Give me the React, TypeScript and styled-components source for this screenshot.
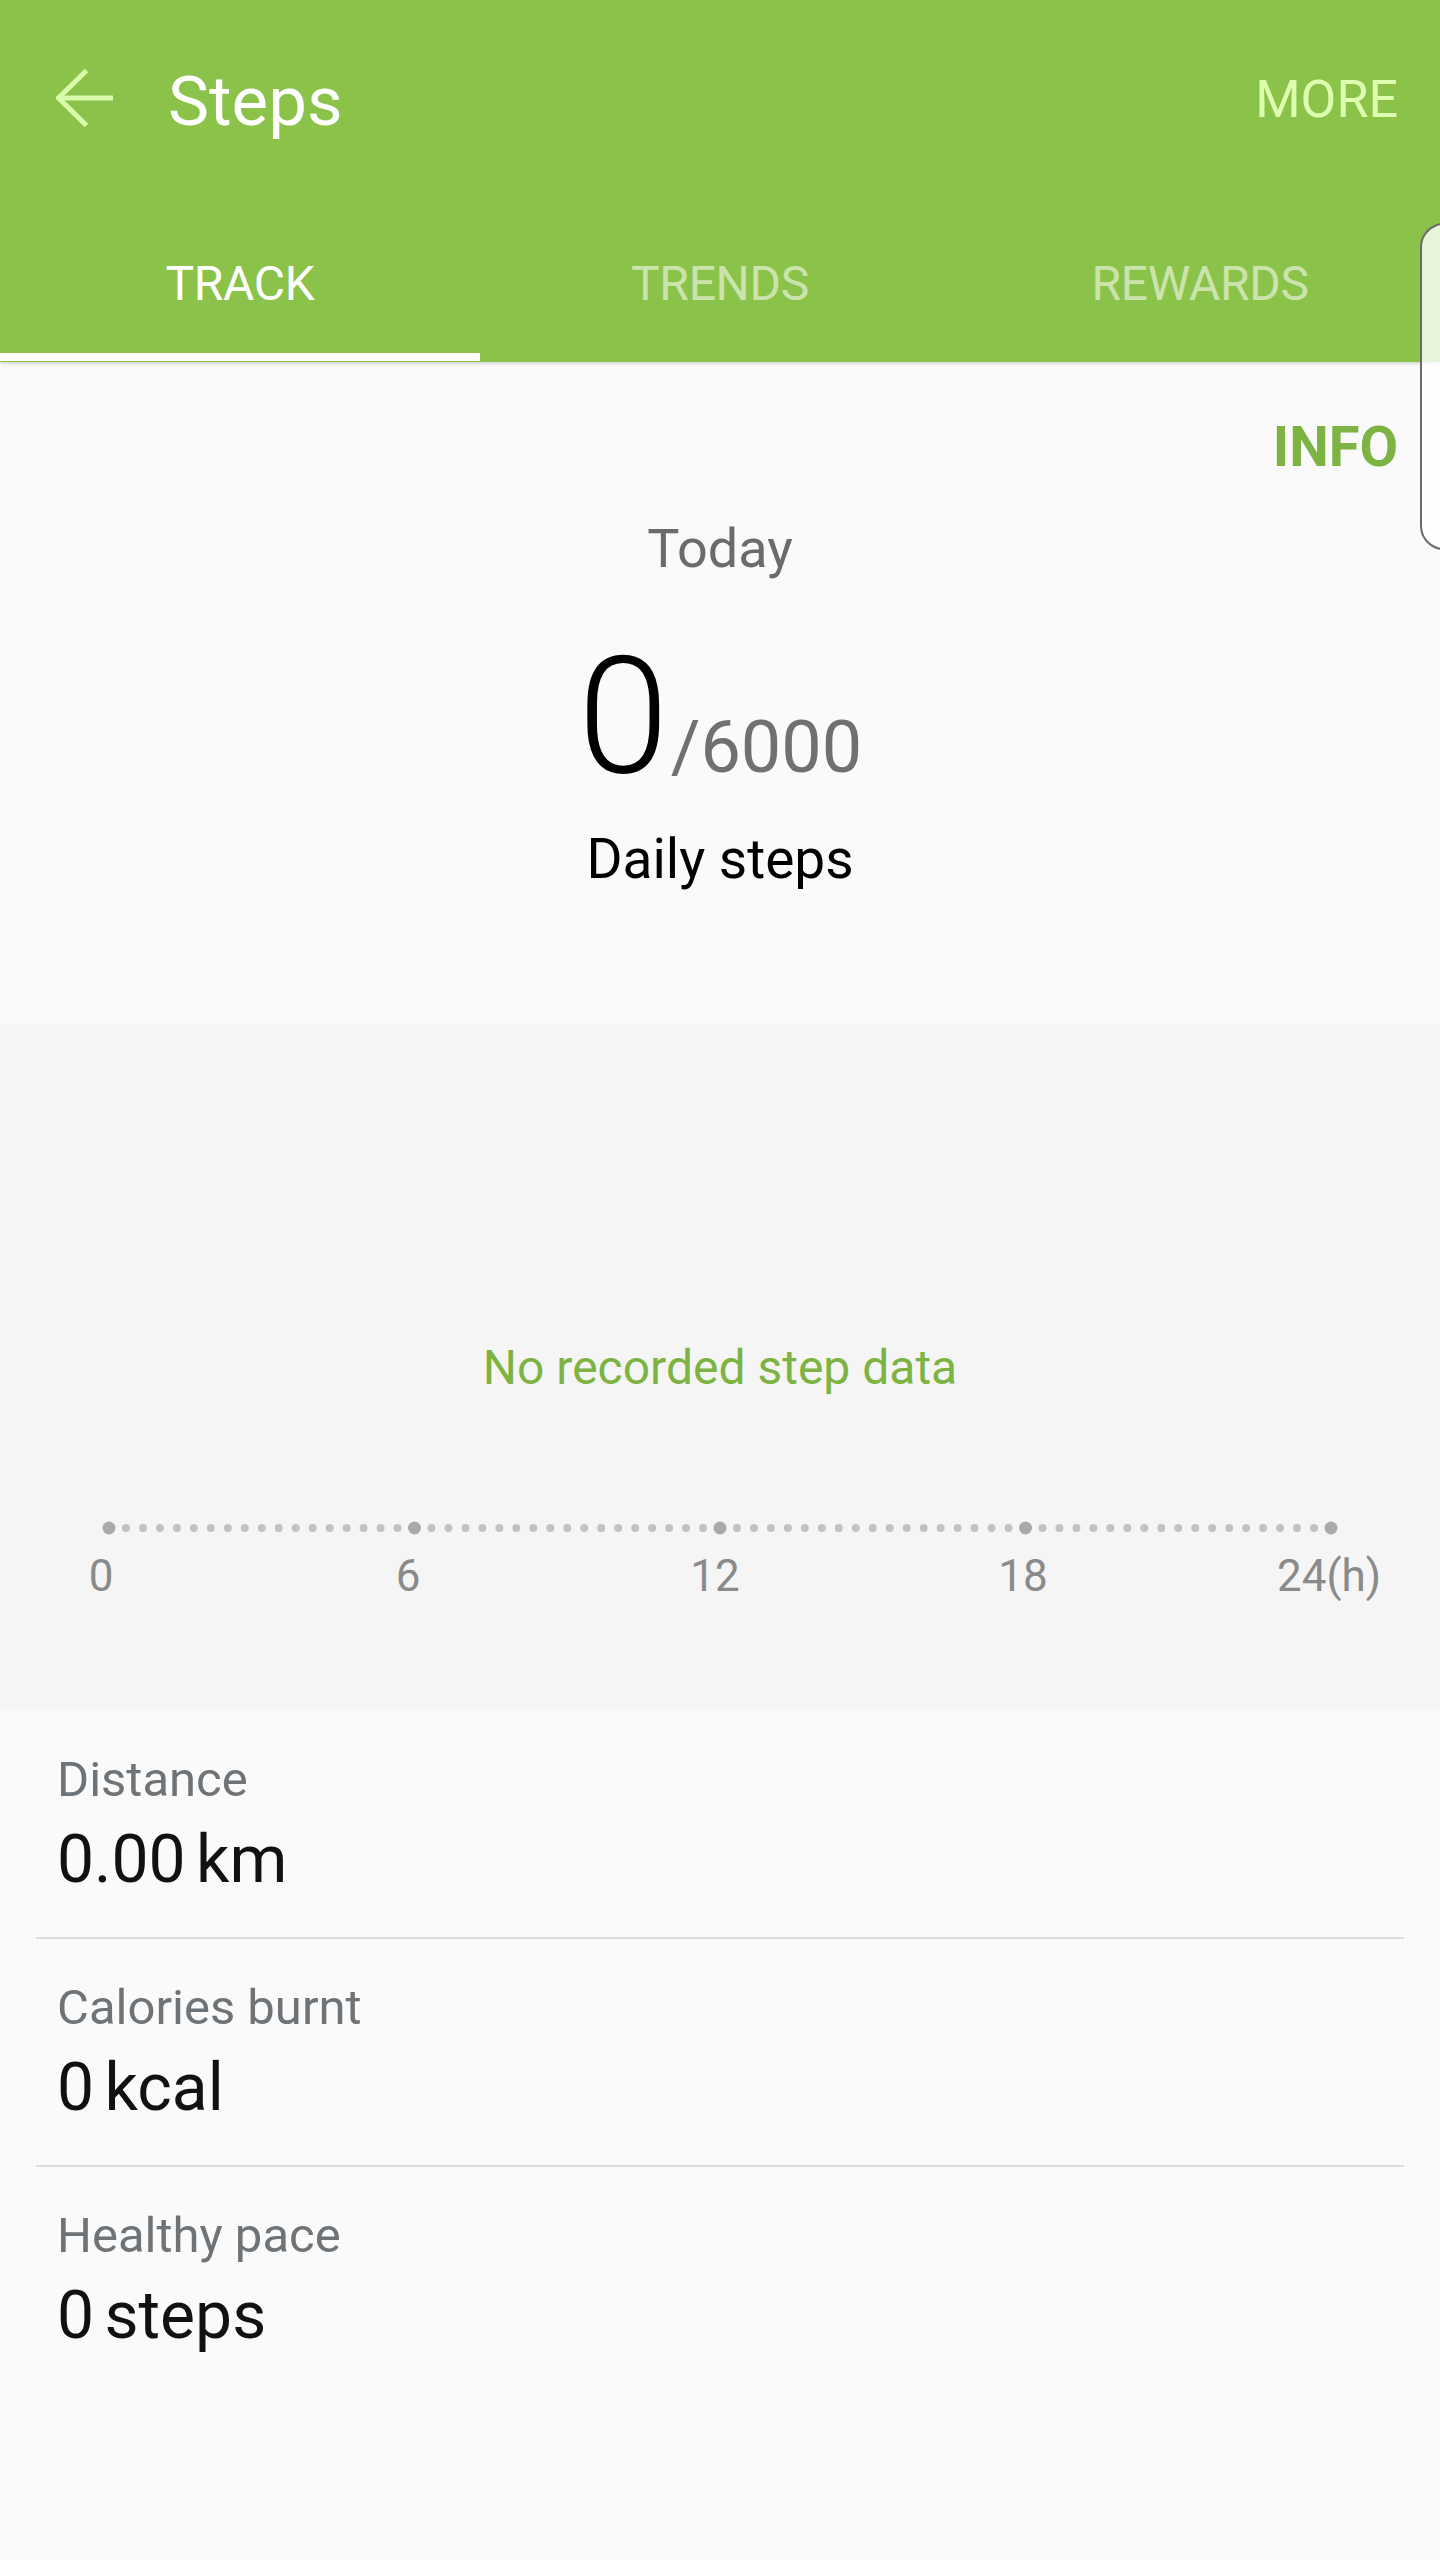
import React from "react";
import styled, { createGlobalStyle } from "styled-components";

const GlobalStyle = createGlobalStyle`
  html, body { margin: 0; padding: 0; }
  body {
    background: #fafafa;
    font-family: Roboto, "Noto Sans", "Liberation Sans", sans-serif;
    -webkit-font-smoothing: antialiased;
  }
`;

const Page = styled.div`
  position: relative;
  width: 1440px;
  min-height: 2560px;
  background: #fafafa;
  overflow: hidden;
`;

const Header = styled.header`
  background: #8bc34a;
  box-shadow: 0 2px 3px rgba(0, 0, 0, 0.14);
  position: relative;
  z-index: 1;
`;

const Toolbar = styled.div`
  height: 202px;
  display: flex;
  align-items: center;
  padding: 0 42px 0 56px;
  box-sizing: border-box;
`;

const BackButton = styled.button`
  width: 58px;
  height: 58px;
  padding: 0;
  border: 0;
  background: none;
  display: flex;
  align-items: center;
  margin-top: -6px;
`;

const Title = styled.h1`
  margin: 2px 0 0 54px;
  flex: 1;
  font-size: 69px;
  font-weight: 400;
  color: #ffffff;
  line-height: 80px;
`;

const MoreButton = styled.span`
  font-size: 52px;
  color: #dfffb0;
  line-height: 64px;
  margin-top: -3px;
`;

const Tabs = styled.nav`
  height: 160px;
  display: grid;
  grid-template-columns: repeat(3, 480px);
`;

const Tab = styled.div<{ $active?: boolean }>`
  position: relative;
  display: flex;
  align-items: center;
  justify-content: center;
  font-size: 48px;
  letter-spacing: -0.3px;
  color: ${(p) => (p.$active ? "#ffffff" : "#cbe4ad")};
  padding-top: 2px;
  box-sizing: border-box;
  &::after {
    content: "";
    position: absolute;
    left: 0;
    right: 0;
    bottom: 1px;
    height: 8px;
    background: ${(p) => (p.$active ? "#ffffff" : "transparent")};
  }
`;

const EdgeHandle = styled.div`
  position: absolute;
  top: 223px;
  right: -4px;
  width: 24px;
  height: 327px;
  box-sizing: border-box;
  border: 2px solid #6a6a6a;
  border-right: none;
  border-radius: 24px 0 0 24px;
  background: rgba(255, 255, 255, 0.8);
  z-index: 5;
`;

const Summary = styled.section`
  height: 662px;
  background: #fafafa;
  display: flex;
  flex-direction: column;
  align-items: center;
  padding: 0 42px;
  box-sizing: border-box;
`;

const InfoLink = styled.div`
  align-self: flex-end;
  margin-top: 53px;
  font-size: 56px;
  line-height: 64px;
  font-weight: 700;
  color: #7cb342;
`;

const Today = styled.div`
  margin-top: 38px;
  font-size: 54px;
  line-height: 64px;
  color: #6b6b6b;
`;

const NumberRow = styled.div`
  margin-top: 53px;
  display: flex;
  align-items: baseline;
  justify-content: center;
`;

const BigValue = styled.span`
  font-size: 164px;
  line-height: 1;
  font-weight: 300;
  color: #000;
`;

const Goal = styled.span`
  font-size: 72px;
  line-height: 1;
  color: #707070;
  margin-left: 2px;
`;

const DailyLabel = styled.div`
  margin-top: 29px;
  font-size: 55px;
  line-height: 64px;
  color: #000;
`;

const Chart = styled.section`
  height: 687px;
  background: #f5f5f5;
  display: flex;
  flex-direction: column;
  align-items: center;
`;

const EmptyMessage = styled.div`
  margin-top: 316px;
  font-size: 48px;
  line-height: 56px;
  color: #7cb342;
`;

const AxisSvg = styled.svg`
  display: block;
  margin-top: 125px;
  width: 1440px;
  height: 14px;
`;

const AxisLabels = styled.div`
  position: relative;
  width: 1440px;
  height: 56px;
  margin-top: 13px;
`;

const AxisLabel = styled.span`
  position: absolute;
  top: 0;
  transform: translateX(-50%);
  font-size: 44px;
  line-height: 56px;
  color: #8a8a8a;
  white-space: nowrap;
`;

const List = styled.section`
  display: flex;
  flex-direction: column;
  padding: 0 36px;
`;

const Row = styled.div<{ $last?: boolean }>`
  height: 228px;
  box-sizing: border-box;
  padding: 41px 0 0 21px;
  border-bottom: 2px solid ${(p) => (p.$last ? "transparent" : "#dcdcdc")};
`;

const RowLabel = styled.div`
  font-size: 49px;
  line-height: 56px;
  color: #6e7377;
`;

const RowValue = styled.div`
  margin-top: 16px;
  font-size: 66px;
  line-height: 72px;
  color: #111;
  word-spacing: -6px;
`;

const BackArrow = () => (
  <svg width="58" height="58" viewBox="0 0 58 58" fill="none">
    <path d="M2 29 H57" stroke="#d9fbab" strokeWidth="5" />
    <path d="M30.5 1.5 L2.5 29 L30.5 56.5" stroke="#d9fbab" strokeWidth="5" strokeLinejoin="miter" />
  </svg>
);

const dotStart = 109;
const dotEnd = 1331;
const dotCount = 73;

const Axis = () => {
  const step = (dotEnd - dotStart) / (dotCount - 1);
  return (
    <AxisSvg viewBox="0 0 1440 14">
      {Array.from({ length: dotCount }).map((_, i) => {
        const major = i % 18 === 0;
        return (
          <circle
            key={i}
            cx={dotStart + i * step}
            cy={7}
            r={major ? 6.5 : 4}
            fill={major ? "#a9a9a9" : "#c2c2c2"}
          />
        );
      })}
    </AxisSvg>
  );
};

const axisLabels = [
  { text: "0", x: 101 },
  { text: "6", x: 408 },
  { text: "12", x: 715 },
  { text: "18", x: 1023 },
  { text: "24(h)", x: 1329 },
];

const rows = [
  { label: "Distance", value: "0.00 km" },
  { label: "Calories burnt", value: "0 kcal" },
  { label: "Healthy pace", value: "0 steps" },
];

export default function App() {
  return (
    <>
      <GlobalStyle />
      <Page>
        <Header>
          <Toolbar>
            <BackButton aria-label="Back">
              <BackArrow />
            </BackButton>
            <Title>Steps</Title>
            <MoreButton>MORE</MoreButton>
          </Toolbar>
          <Tabs>
            <Tab $active>TRACK</Tab>
            <Tab>TRENDS</Tab>
            <Tab>REWARDS</Tab>
          </Tabs>
        </Header>
        <EdgeHandle />
        <Summary>
          <InfoLink>INFO</InfoLink>
          <Today>Today</Today>
          <NumberRow>
            <BigValue>0</BigValue>
            <Goal>/6000</Goal>
          </NumberRow>
          <DailyLabel>Daily steps</DailyLabel>
        </Summary>
        <Chart>
          <EmptyMessage>No recorded step data</EmptyMessage>
          <Axis />
          <AxisLabels>
            {axisLabels.map((l) => (
              <AxisLabel key={l.text} style={{ left: l.x }}>
                {l.text}
              </AxisLabel>
            ))}
          </AxisLabels>
        </Chart>
        <List>
          {rows.map((r, i) => (
            <Row key={r.label} $last={i === rows.length - 1}>
              <RowLabel>{r.label}</RowLabel>
              <RowValue>{r.value}</RowValue>
            </Row>
          ))}
        </List>
      </Page>
    </>
  );
}
